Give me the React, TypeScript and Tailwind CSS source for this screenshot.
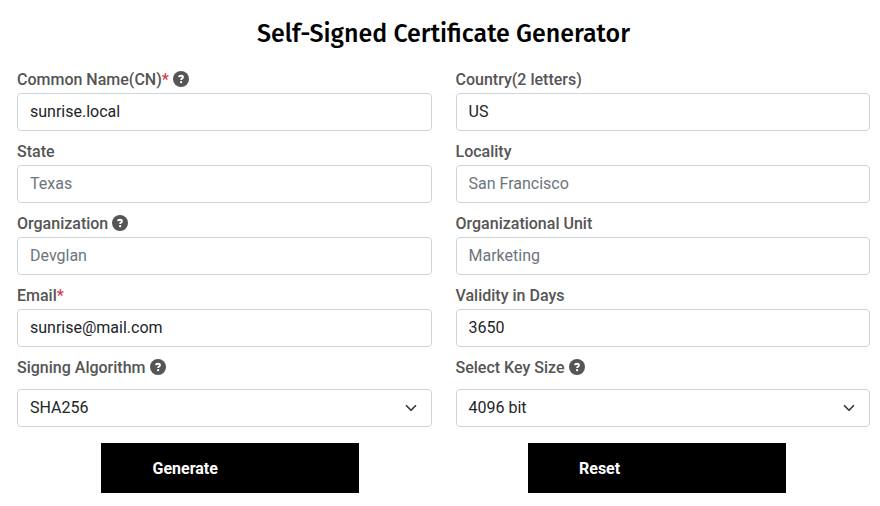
import React from 'react';

type FieldProps = { label: string; required?: boolean; help?: boolean; value?: string; placeholder?: string };

function HelpIcon() {
  return (
    <svg className="ml-1 size-4 -translate-y-px" viewBox="0 0 16 16" fill="none">
      <circle cx="8" cy="8" r="8" fill="#555555" />
      <path d="M5.9 6.1C6 5.1 6.8 4.8 8 4.8c1.3 0 2 .6 2 1.5C10 7.5 8.1 7.5 8.1 9" stroke="#fff" strokeWidth="1.9" />
      <circle cx="8.1" cy="11.2" r="1.15" fill="#fff" />
    </svg>
  );
}

function Label({ label, required, help }: FieldProps) {
  return (
    <label className="flex h-6 items-center whitespace-nowrap font-medium leading-6 text-[#555555]">
      {label}
      {required && <span className="text-[#dc3545]">*</span>}
      {help && <HelpIcon />}
    </label>
  );
}

function Field(props: FieldProps) {
  return (
    <div className="mb-[9px]">
      <Label {...props} />
      <input
        className="mt-px block h-[38px] w-full rounded-[4px] border border-[#ced4da] bg-white px-3 pb-[7px] pt-[5px] text-[#212529] outline-none placeholder:text-[#6c757d]"
        defaultValue={props.value}
        placeholder={props.placeholder}
      />
    </div>
  );
}

function Select(props: FieldProps) {
  return (
    <div>
      <Label {...props} />
      <div className="mt-[9px] flex h-[38px] items-center justify-between rounded-[4px] border border-[#ced4da] px-3 text-[#212529]">
        <span>{props.value}</span>
        <svg className="h-3 w-4" viewBox="0 0 16 16" fill="none" stroke="#343a40" strokeWidth="2.3" strokeLinecap="round" strokeLinejoin="round">
          <path d="m2 5 6 6 6-6" />
        </svg>
      </div>
    </div>
  );
}

export default function App() {
  return (
    <main className="h-[506px] w-[880px] overflow-hidden bg-white pl-[17px] pr-[10px] pt-[15px] font-['Roboto','Liberation_Sans',sans-serif] text-base">
      <h1 className="h-[53px] text-center font-['Fira_Sans','Noto_Sans',sans-serif] text-[25px] font-medium leading-[38px] text-black">
        Self-Signed Certificate Generator
      </h1>
      <div className="grid grid-cols-2 gap-x-6">
        <Field label="Common Name(CN)" required help value="sunrise.local" />
        <Field label="Country(2 letters)" value="US" />
        <Field label="State" placeholder="Texas" />
        <Field label="Locality" placeholder="San Francisco" />
        <Field label="Organization" help placeholder="Devglan" />
        <Field label="Organizational Unit" placeholder="Marketing" />
        <Field label="Email" required value="sunrise@mail.com" />
        <Field label="Validity in Days" value="3650" />
        <Select label="Signing Algorithm" help value="SHA256" />
        <Select label="Select Key Size" help value="4096 bit" />
      </div>
      <div className="mt-4 flex gap-[169px] pl-[84px]">
        <button className="h-[50px] w-[258px] bg-black pl-[51.5px] pt-0.5 text-left font-bold text-white">Generate</button>
        <button className="h-[50px] w-[258px] bg-black pl-[51px] pt-0.5 text-left font-bold text-white">Reset</button>
      </div>
    </main>
  );
}
